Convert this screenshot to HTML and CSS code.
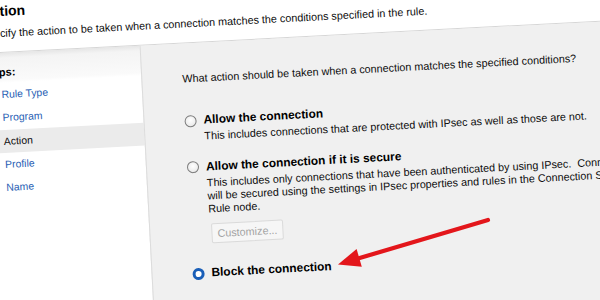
FILE: index.html
```html
<!DOCTYPE html>
<html lang="en">
<head>
<meta charset="utf-8">
<title>New Inbound Rule Wizard - Action</title>
<link rel="stylesheet" href="styles.css">
</head>
<body>
<div class="stage">
  <header class="head">
    <div class="title">Action</div>
    <div class="subtitle">Specify the action to be taken when a connection matches the conditions specified in the rule.</div>
  </header>
  <div class="main">
    <nav class="steps">
      <div class="steps-title">Steps:</div>
      <ul class="step-list">
        <li class="step">Rule Type</li>
        <li class="step">Program</li>
        <li class="step current">Action</li>
        <li class="step">Profile</li>
        <li class="step">Name</li>
      </ul>
    </nav>
    <section class="content">
      <p class="question">What action should be taken when a connection matches the specified conditions?</p>
      <div class="option first"><span class="radio"></span><span class="label">Allow the connection</span></div>
      <p class="desc">This includes connections that are protected with IPsec as well as those are not.</p>
      <div class="option second"><span class="radio"></span><span class="label">Allow the connection if it is secure</span></div>
      <p class="desc">This includes only connections that have been authenticated by using IPsec.&nbsp; Connections<br>will be secured using the settings in IPsec properties and rules in the Connection Security<br>Rule node.</p>
      <div class="btn">Customize...</div>
      <div class="option third"><span class="radio checked"></span><span class="label">Block the connection</span></div>
    </section>
  </div>
</div>
<svg class="arrow" width="600" height="300" viewBox="0 0 600 300">
  <line x1="488" y1="220" x2="358" y2="258.5" stroke="#e3161b" stroke-width="4.2" stroke-linecap="round"/>
  <polygon points="338,264.5 356.6,249 361.8,266.8" fill="#e3161b"/>
</svg>
</body>
</html>
```
FILE: styles.css
```css
html, body {
  margin: 0;
  padding: 0;
  width: 600px;
  height: 300px;
  overflow: hidden;
  background: #f0f0f0;
}
body {
  position: relative;
  font-family: "Liberation Sans", Arial, sans-serif;
  color: #0c0c0c;
}
.stage {
  width: 760px;
  height: 400px;
  display: flex;
  flex-direction: column;
  background: #f0f0f0;
  transform-origin: 40px 20px;
  transform: translate(-40px, -20px) rotate(-3deg);
}
.head {
  box-sizing: border-box;
  height: 73px;
  padding: 23px 0 0 19px;
  background: #ffffff;
  border-bottom: 1px solid #d6d6d6;
  flex: none;
}
.title {
  margin-left: 2px;
  font-weight: bold;
  font-size: 14px;
  line-height: 16px;
  color: #000;
}
.subtitle {
  margin-top: 8px;
  font-size: 10.8px;
  line-height: 13px;
  white-space: nowrap;
}
.main {
  flex: 1;
  display: flex;
}
.steps {
  width: 177px;
  flex: none;
  padding-top: 12px;
  background: linear-gradient(to bottom, #e6e6e6 0px, #f4f4f4 5px, #fafafa 27px, #ffffff 30px);
}
.steps-title {
  padding-left: 18px;
  font-weight: bold;
  font-size: 11px;
  line-height: 14px;
  color: #000;
}
.step-list {
  list-style: none;
  margin: 4px 0 0 0;
  padding: 0;
}
.step {
  height: 23.33px;
  line-height: 23.33px;
  padding-left: 36.5px;
  font-size: 10.4px;
  color: #2860b4;
}
.step.current {
  color: #0c0c0c;
  background: #ebebeb;
}
.content {
  flex: 1;
  background: #f0f0f0;
  border-left: 1px solid #dcdcdc;
  padding: 29px 0 0 40px;
}
.question {
  margin: 0;
  font-size: 10.8px;
  line-height: 13px;
  white-space: nowrap;
}
.option {
  display: flex;
  align-items: center;
  height: 15px;
}
.option.first { margin-top: 28px; }
.option.second { margin-top: 16.5px; }
.option.third { margin-top: 22.5px; }
.radio {
  box-sizing: border-box;
  width: 12px;
  height: 12px;
  border-radius: 50%;
  border: 1.2px solid #7c7c7c;
  background: radial-gradient(circle at 50% 40%, #ffffff 0%, #ececec 70%, #dcdcdc 100%);
  flex: none;
}
.radio.checked {
  border: 3.6px solid #1a5fb8;
  background: #ffffff;
}
.label {
  margin-left: 7px;
  font-weight: bold;
  font-size: 11.9px;
  line-height: 15px;
  white-space: nowrap;
  color: #000;
}
.desc {
  margin: 2px 0 0 19px;
  font-size: 10.8px;
  line-height: 13px;
  white-space: nowrap;
}
.btn {
  box-sizing: border-box;
  width: 72px;
  height: 20px;
  margin: 8px 0 0 21px;
  border: 1px solid #dadada;
  border-radius: 2px;
  background: #f6f6f6;
  color: #a3a3a3;
  font-size: 10.8px;
  line-height: 18px;
  text-align: center;
}
.arrow {
  position: absolute;
  left: 0;
  top: 0;
  pointer-events: none;
}
```
